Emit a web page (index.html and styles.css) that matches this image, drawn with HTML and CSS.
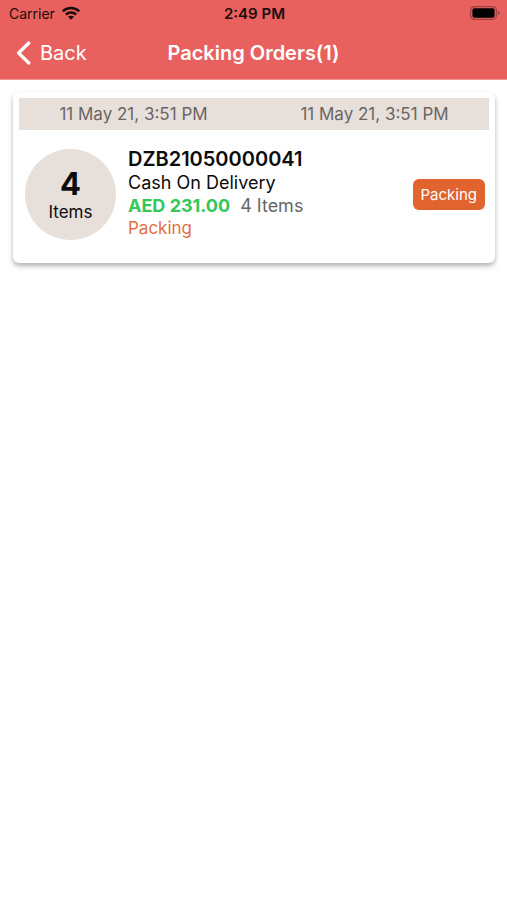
FILE: index.html
```html
<!DOCTYPE html>
<html lang="en">
<head>
<meta charset="utf-8">
<meta name="viewport" content="width=device-width, initial-scale=1">
<title>Packing Orders</title>
<link rel="stylesheet" href="styles.css">
</head>
<body>
<header class="header">
  <div class="status">
    <div class="status-side">
      <span>Carrier</span>
      <svg class="wifi" viewBox="0 0 20 14" aria-hidden="true">
        <path d="M1.8 5.4C6.3 1 13.7 1 18.2 5.4M4.8 8.6C7.7 5.8 12.3 5.8 15.2 8.6" fill="none" stroke="currentColor" stroke-width="2.5"/>
        <path d="M7 10.8C8.7 9.3 11.3 9.3 13 10.8L10 13.8Z" fill="currentColor"/>
      </svg>
    </div>
    <time class="clock">2:49 PM</time>
    <div class="status-side status-end">
      <svg class="battery" viewBox="0 0 30 14" aria-hidden="true">
        <rect x=".6" y=".6" width="25.8" height="12.8" rx="3.8" fill="none" stroke="#9c3f3e" stroke-width="1.2"/>
        <rect x="2.4" y="2.3" width="22.2" height="9.4" rx="2" fill="#000"/>
        <path d="M28 4.8C30 5.5 30 8.5 28 9.2Z" fill="#9c3f3e"/>
      </svg>
    </div>
  </div>
  <nav class="nav">
    <a class="back" href="#">
      <svg class="chevron" viewBox="0 0 15 24" aria-hidden="true">
        <path d="M12.8 2L2.6 12L12.8 22" fill="none" stroke="currentColor" stroke-width="3.2" stroke-linecap="round" stroke-linejoin="round"/>
      </svg>
      Back
    </a>
    <h1 class="title">Packing Orders(1)</h1>
  </nav>
</header>
<main class="orders">
  <article class="card">
    <div class="dates">
      <time>11 May 21, 3:51 PM</time>
      <time>11 May 21, 3:51 PM</time>
    </div>
    <div class="order">
      <div class="count"><strong>4</strong><span>Items</span></div>
      <div class="details">
        <h2 class="number">DZB21050000041</h2>
        <p class="payment">Cash On Delivery</p>
        <p class="total"><strong>AED 231.00</strong><span>4 Items</span></p>
        <p class="state">Packing</p>
      </div>
      <button class="action" type="button">Packing</button>
    </div>
  </article>
</main>
</body>
</html>
```
FILE: styles.css
```css
* {
  box-sizing: border-box;
}

body {
  margin: 0;
  background: #fff;
  color: #0c0c0c;
  font-family: Inter, "Liberation Sans", sans-serif;
  font-size: 17px;
}

h1,
h2,
p {
  margin: 0;
}

.header {
  background: #e8615f;
  border-bottom: 1px solid #ef9694;
}

.status {
  display: grid;
  grid-template-columns: 1fr auto 1fr;
  align-items: center;
  height: 26px;
  padding: 0 7px 0 9px;
  color: #1c0c0c;
  font-size: 14px;
}

.status-side {
  display: flex;
  align-items: center;
  gap: 6px;
}

.status-end {
  justify-content: flex-end;
}

.wifi {
  width: 20px;
  height: 14px;
}

.battery {
  width: 30px;
  height: 14px;
}

.clock {
  font-size: 15px;
  font-weight: 600;
}

.nav {
  display: grid;
  grid-template-columns: 1fr auto 1fr;
  align-items: center;
  height: 53px;
  padding: 0 16px;
  color: #fff;
}

.back {
  display: flex;
  align-items: center;
  gap: 9px;
  color: #fff;
  font-size: 20px;
  text-decoration: none;
}

.chevron {
  width: 15px;
  height: 24px;
}

.title {
  font-size: 20px;
  font-weight: 600;
}

.orders {
  padding: 12px 12px 12px 13px;
}

.card {
  padding: 6px;
  border-radius: 6px;
  background: #fff;
  box-shadow: 0 3px 5px rgba(0, 0, 0, 0.3);
}

.dates {
  display: grid;
  grid-template-columns: 1fr 1fr;
  column-gap: 12px;
  align-items: center;
  height: 32px;
  background: #e7dfda;
  color: #6a6663;
  text-align: center;
}

.order {
  display: flex;
  align-items: center;
  gap: 12px;
  padding: 18px 4px 17px 6px;
}

.count {
  display: flex;
  flex-direction: column;
  align-items: center;
  justify-content: center;
  width: 91px;
  height: 91px;
  border-radius: 50%;
  background: #e7dfda;
  font-size: 17px;
  line-height: 20px;
}

.count strong {
  font-size: 31px;
  line-height: 36px;
}

.details {
  flex: 1;
  line-height: 23px;
}

.number {
  font-size: 20px;
  font-weight: 600;
}

.payment,
.total {
  font-size: 18px;
}

.total {
  display: flex;
  gap: 10px;
  color: #666;
}

.total strong {
  color: #34c759;
}

.state {
  color: #e2703f;
}

.action {
  height: 31px;
  padding: 0 8px;
  border: 0;
  border-radius: 6px;
  background: #e1642f;
  color: #fff;
  font: inherit;
  font-size: 15px;
}
```
